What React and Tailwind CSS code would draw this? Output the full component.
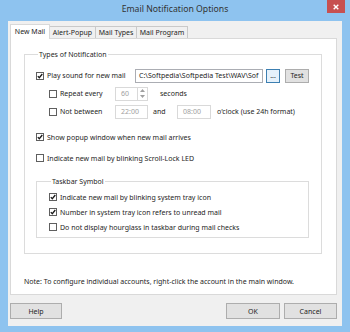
import React from "react";

function Check({ checked }) {
  return (
    <span className="flex h-[8px] w-[8px] shrink-0 items-center justify-center border border-[#5f5f5f] bg-white">
      {checked ? (
        <svg width="6" height="6" viewBox="0 0 6 6">
          <path d="M0.8 3.1 L2.3 4.7 L5.3 1" fill="none" stroke="#1a1a1a" strokeWidth="1.3" />
        </svg>
      ) : null}
    </span>
  );
}

function Option({ checked, children, className = "" }) {
  return (
    <div className={`flex h-[10px] items-center gap-[3px] ${className}`}>
      <Check checked={checked} />
      <span className="whitespace-nowrap">{children}</span>
    </div>
  );
}

function WinButton({ children, className = "", focused }) {
  return (
    <button
      className={`flex shrink-0 items-center justify-center border ${
        focused ? "border-[#3c7fb1] bg-[#e5f1fb]" : "border-[#adadad] bg-[#e1e1e1]"
      } ${className}`}
    >
      {children}
    </button>
  );
}

const tabs = [
  { label: "New Mail", width: "w-[40px]" },
  { label: "Alert-Popup", width: "w-[47px]" },
  { label: "Mail Types", width: "w-[42px]" },
  { label: "Mail Program", width: "w-[52px]" },
];

export default function App() {
  return (
    <div className="flex h-[332px] w-[350px] flex-col bg-[#8ec3ef] font-['Noto_Sans',sans-serif] text-[7px] leading-none text-[#1e1e1e]">
      <div className="relative flex h-[21px] shrink-0 items-center justify-center pb-[3px]">
        <span className="text-[8.7px] text-[#333]">Email Notification Options</span>
        <div className="absolute right-[5px] top-0 flex h-[13px] w-[18px] items-center justify-center bg-[#c75050]">
          <svg width="6" height="6" viewBox="0 0 6 6">
            <path d="M0.7 0.7 L5.3 5.3 M5.3 0.7 L0.7 5.3" stroke="#fff" strokeWidth="1.4" />
          </svg>
        </div>
      </div>

      <div className="mx-[8px] mb-[6px] flex flex-1 flex-col bg-[#f0f0f0] pl-[2px] pr-[5px] pt-[3px]">
        <div className="flex h-[14px] items-end">
          {tabs.map((tab, i) =>
            i === 0 ? (
              <div
                key={tab.label}
                className={`z-10 -mb-px flex h-[15px] items-center justify-center border border-b-0 border-[#d9d9d9] bg-white pb-[1px] ${tab.width}`}
              >
                {tab.label}
              </div>
            ) : (
              <div
                key={tab.label}
                className={`-ml-px flex h-[12px] items-center justify-center border border-b-0 border-[#c9c9c9] bg-[#f0f0f0] ${tab.width}`}
              >
                {tab.label}
              </div>
            ),
          )}
        </div>

        <div className="flex h-[257px] flex-col border border-[#d9d9d9] bg-white pl-[13px] pr-[14px] pt-[10px]">
          <fieldset className="h-[205px] border border-[#dcdcdc] pl-[11px] pr-[10px]">
            <legend className="ml-[2px] px-[1px] leading-[11px]">Types of Notification</legend>

            <div className="mt-[8px] flex h-[15px] items-center">
              <Option checked className="w-[99px]">
                Play sound for new mail
              </Option>
              <div className="flex h-[14px] w-[128px] items-center overflow-hidden whitespace-nowrap border border-[#abadb3] px-[3px]">
                C:\Softpedia\Softpedia Test\WAV\Sof
              </div>
              <WinButton focused className="ml-[3px] h-[14px] w-[14px]">
                ...
              </WinButton>
              <WinButton className="ml-[5px] h-[14px] w-[24px]">Test</WinButton>
            </div>

            <div className="mt-[3px] flex h-[15px] items-center pl-[13px]">
              <Option className="w-[66px]">Repeat every</Option>
              <div className="flex h-[14px] w-[33px] items-center border border-[#d9d9d9] text-[#a0a0a0]">
                <span className="flex-1 pl-[5px]">60</span>
                <div className="flex h-full w-[10px] flex-col border-l border-[#d9d9d9]">
                  <span className="flex flex-1 items-center justify-center">
                    <svg width="5" height="3" viewBox="0 0 5 3">
                      <path d="M0 3 L2.5 0 L5 3 Z" fill="#a0a0a0" />
                    </svg>
                  </span>
                  <span className="flex flex-1 items-center justify-center">
                    <svg width="5" height="3" viewBox="0 0 5 3">
                      <path d="M0 0 L2.5 3 L5 0 Z" fill="#a0a0a0" />
                    </svg>
                  </span>
                </div>
              </div>
              <span className="ml-[12px]">seconds</span>
            </div>

            <div className="mt-[3px] flex h-[15px] items-center pl-[13px]">
              <Option className="w-[66px]">Not between</Option>
              <div className="flex h-[14px] w-[33px] items-center border border-[#d9d9d9] pl-[5px] text-[#a0a0a0]">
                22:00
              </div>
              <span className="ml-[5px] w-[24px]">and</span>
              <div className="flex h-[14px] w-[34px] items-center border border-[#d9d9d9] pl-[5px] text-[#a0a0a0]">
                08:00
              </div>
              <span className="ml-[6px]">o'clock (use 24h format)</span>
            </div>

            <Option checked className="mt-[13px]">
              Show popup window when new mail arrives
            </Option>
            <Option className="mt-[11px]">Indicate new mail by blinking Scroll-Lock LED</Option>

            <fieldset className="mt-[13px] h-[62px] w-[273px] border border-[#dcdcdc] pl-[12px]">
              <legend className="ml-[2px] px-[1px] leading-[11px]">Taskbar Symbol</legend>
              <Option checked className="mt-[5px]">
                Indicate new mail by blinking system tray icon
              </Option>
              <Option checked className="mt-[5px]">
                Number in system tray icon refers to unread mail
              </Option>
              <Option className="mt-[5px]">Do not display hourglass in taskbar during mail checks</Option>
            </fieldset>
          </fieldset>

          <div className="mt-[24px] whitespace-nowrap">
            Note: To configure individual accounts, right-click the account in the main window.
          </div>
        </div>

        <div className="mt-[8px] flex items-center">
          <WinButton className="h-[16px] w-[52px]">Help</WinButton>
          <WinButton className="ml-auto h-[16px] w-[54px]">OK</WinButton>
          <WinButton className="ml-[4px] h-[16px] w-[53px]">Cancel</WinButton>
        </div>
      </div>
    </div>
  );
}
